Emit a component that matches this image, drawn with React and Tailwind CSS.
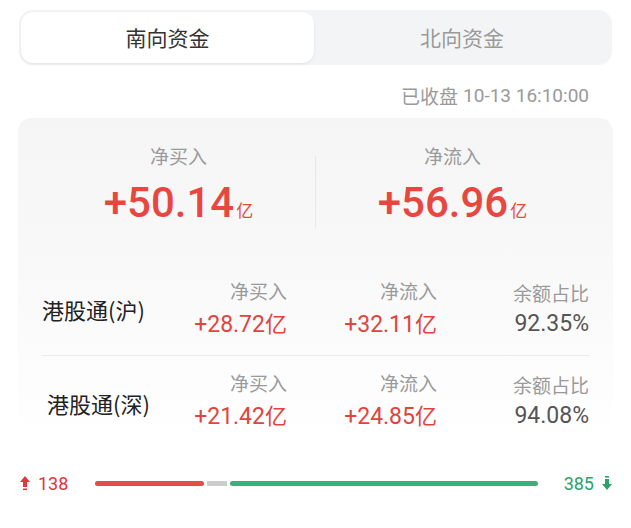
import React from "react";

const CJK = "font-['Noto_Sans_CJK_SC','Noto_Sans',sans-serif]";
const NUM = "font-['Roboto','Noto_Sans_CJK_SC',sans-serif]";

function UpArrow() {
  return (
    <svg width="12" height="16" viewBox="0 0 12 16" className="block">
      <path d="M6 1 L11 7 L8 7 L8 12 L4 12 L4 7 L1 7 Z" fill="#e0363c" />
      <rect x="4" y="13.5" width="4" height="1.6" fill="#e0363c" />
    </svg>
  );
}

function DownArrow() {
  return (
    <svg width="12" height="16" viewBox="0 0 12 16" className="block">
      <rect x="4" y="1" width="4" height="1.6" fill="#2ea06a" />
      <path d="M6 15 L11 9 L8 9 L8 4 L4 4 L4 9 L1 9 Z" fill="#2ea06a" />
    </svg>
  );
}

function Row({ name, buy, flow, ratio, indent }) {
  return (
    <div className="flex items-center h-[91px]">
      <div className={`${CJK} text-[22px] text-[#222] w-[150px] ${indent ? "pl-[5px] pt-[4px]" : ""}`}>{name}</div>
      <div className="flex flex-col items-end w-[95px]">
        <div className={`${CJK} text-[19px] text-[#9a9a9a] leading-[28px]`}>净买入</div>
        <div className={`${NUM} text-[23px] text-[#e0443d] leading-[34px]`}>
          {buy}
          <span className={`${CJK} text-[22px]`}>亿</span>
        </div>
      </div>
      <div className="flex flex-col items-end w-[150px]">
        <div className={`${CJK} text-[19px] text-[#9a9a9a] leading-[28px]`}>净流入</div>
        <div className={`${NUM} text-[23px] text-[#e0443d] leading-[34px]`}>
          {flow}
          <span className={`${CJK} text-[22px]`}>亿</span>
        </div>
      </div>
      <div className="flex flex-col items-end w-[152px]">
        <div className={`${CJK} text-[19px] text-[#9a9a9a] leading-[28px]`}>余额占比</div>
        <div className={`${NUM} text-[23px] text-[#555] leading-[34px]`}>{ratio}</div>
      </div>
    </div>
  );
}

export default function App() {
  return (
    <div className="w-[631px] h-[528px] bg-white pt-[10px] px-[18px]">
      {/* tabs */}
      <div className="mx-[1px] h-[55px] rounded-[14px] bg-[#f3f4f6] p-[2px] flex">
        <div className={`${CJK} w-[293px] rounded-[12px] bg-white shadow-[0_1px_3px_rgba(0,0,0,0.08)] flex items-center justify-center text-[21px] text-[#333]`}>
          南向资金
        </div>
        <div className={`${CJK} flex-1 flex items-center justify-center text-[21px] text-[#9a9a9a]`}>
          北向资金
        </div>
      </div>

      {/* timestamp */}
      <div className="h-[53px] flex items-center justify-end pr-[24px] pt-[10px]">
        <span className={`${CJK} text-[19px] text-[#9a9a9a]`}>已收盘</span>
        <span className={`${NUM} text-[19px] text-[#9a9a9a] ml-[5px]`}>10-13 16:10:00</span>
      </div>

      {/* card */}
      <div className="rounded-[14px] bg-gradient-to-b from-[#f5f5f5] via-[#f9f9f9] to-[#ffffff] h-[322px] px-[24px]">
        <div className="flex h-[146px] pt-[24px]">
          <div className="flex-1 flex flex-col items-center">
            <div className={`${CJK} text-[19px] text-[#9a9a9a] leading-[28px]`}>净买入</div>
            <div className="flex items-baseline mt-[8px]">
              <span className={`${NUM} text-[42px] leading-[50px] font-medium text-[#e8473f]`}>+50.14</span>
              <span className={`${CJK} text-[17px] text-[#e8473f] ml-[2px]`}>亿</span>
            </div>
          </div>
          <div className="w-px h-[72px] mt-[14px] bg-[#e8e8e8]"></div>
          <div className="flex-1 flex flex-col items-center">
            <div className={`${CJK} text-[19px] text-[#9a9a9a] leading-[28px]`}>净流入</div>
            <div className="flex items-baseline mt-[8px]">
              <span className={`${NUM} text-[42px] leading-[50px] font-medium text-[#e8473f]`}>+56.96</span>
              <span className={`${CJK} text-[17px] text-[#e8473f] ml-[2px]`}>亿</span>
            </div>
          </div>
        </div>
        <Row name="港股通(沪)" buy="+28.72" flow="+32.11" ratio="92.35%" />
        <div className="h-px bg-[#ebebeb]"></div>
        <Row name="港股通(深)" buy="+21.42" flow="+24.85" ratio="94.08%" indent />
      </div>

      {/* bottom bar */}
      <div className="flex items-center h-[50px] mt-[18px]">
        <div className="flex items-center w-[77px] pl-[1px]">
          <UpArrow />
          <span className={`${NUM} text-[18px] text-[#e0363c] ml-[7px]`}>138</span>
        </div>
        <div className="flex items-center gap-[3px] w-[443px]">
          <div className="h-[5px] rounded-full bg-[#e84a45] w-[109px]"></div>
          <div className="h-[5px] bg-[#cccccc] w-[20px]"></div>
          <div className="h-[5px] rounded-full bg-[#35b27a] flex-1"></div>
        </div>
        <div className="flex items-center justify-end flex-1">
          <span className={`${NUM} text-[18px] text-[#2ea06a] mr-[7px]`}>385</span>
          <DownArrow />
        </div>
      </div>
    </div>
  );
}
